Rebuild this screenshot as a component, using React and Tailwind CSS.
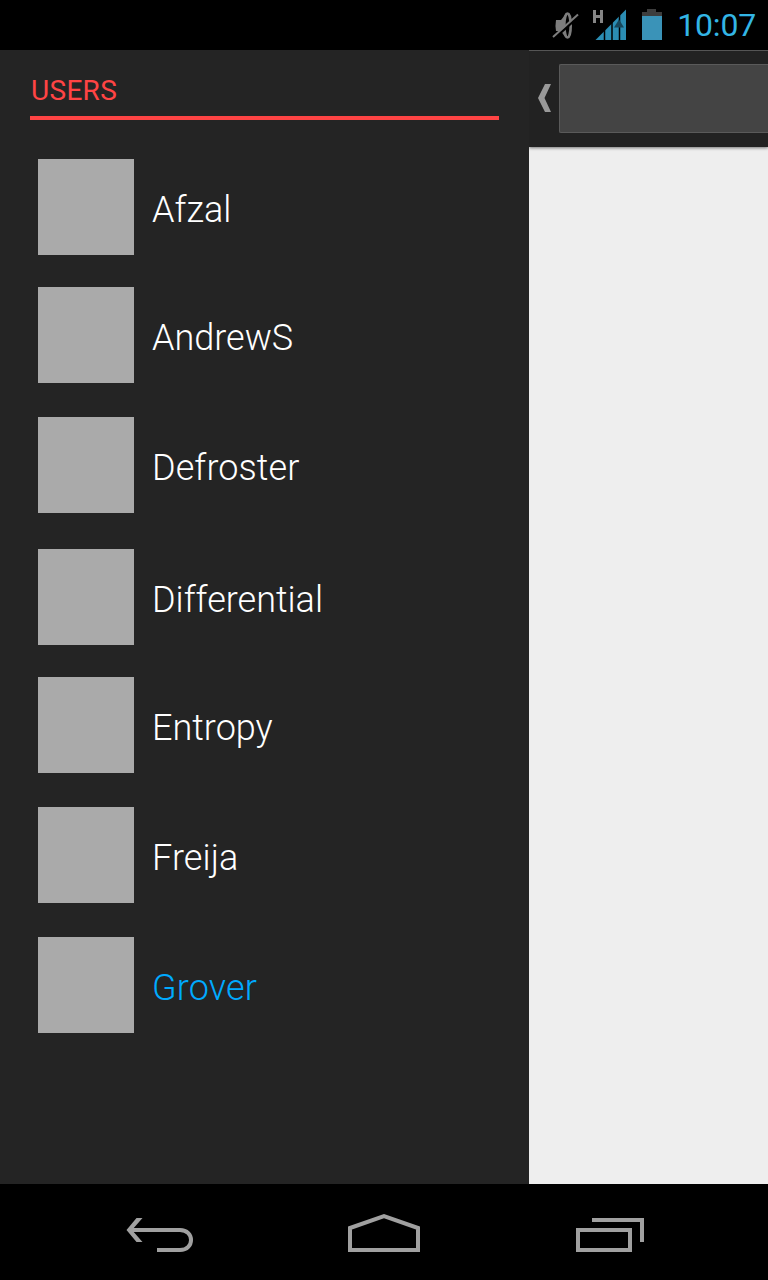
const users = [
  { name: "Afzal", row: "h-32", tracking: "tracking-normal" },
  { name: "AndrewS", row: "h-[130px]", tracking: "tracking-normal" },
  { name: "Defroster", row: "h-[132px]", tracking: "tracking-[0.08px]" },
  { name: "Differential", row: "h-32", tracking: "tracking-normal" },
  { name: "Entropy", row: "h-[130px]", tracking: "tracking-normal" },
  { name: "Freija", row: "h-[130px]", tracking: "tracking-[0.1px]" },
  { name: "Grover", row: "h-24", tracking: "tracking-[0.15px]", active: true },
];

function StatusBar() {
  return (
    <header className="flex h-[50px] shrink-0 items-center justify-end bg-black pr-3">
      <svg className="h-[50px] w-[126px]" viewBox="0 0 126 50">
        <path d="M14 20h5l4-5v22l-4-6h-5q-1-5.500 0-11z" fill="#7d7d7d" />
        <ellipse cx="25.500" cy="25.500" rx="3.200" ry="12" fill="#000" stroke="#7d7d7d" strokeWidth="2.600" />
        <path d="M12 38.500L36.500 16.500" stroke="#000" strokeWidth="2.500" />
        <path d="M11 37L36 14.500" stroke="#7d7d7d" strokeWidth="2" />
        <path d="M51 10h3v5h4v-5h3v13h-3v-5h-4v5h-3z" fill="#858585" />
        <path d="M53.500 40L84 9.500V40z" fill="#2b8db3" />
        <path d="M62.500 28v13M70 20v21M77.500 13v28" stroke="#000" strokeWidth="1.500" />
        <path d="M77 19.500l5 8H72z" fill="#17465a" />
        <path d="M105 9h9v3h6v4h-20v-4h5z" fill="#3d3d3d" />
        <path d="M100 16h20v24h-20z" fill="#3a93b8" />
      </svg>
      <time className="w-[88px] shrink-0 text-right text-[32px] leading-8 tracking-[-0.2px] whitespace-nowrap text-[#33b5e5]">10:07</time>
    </header>
  );
}

function UserDrawer() {
  return (
    <aside className="flex w-[529px] shrink-0 flex-col bg-[#242424] pr-[30px] pl-[30px]">
      <h1 className="h-[70px] border-b-4 border-[#ff4444] pt-[27px] pl-px text-[28px] leading-7 font-normal tracking-[0.3px] text-[#ff4444]">USERS</h1>
      <ul className="flex flex-col pt-[39px] pl-2">
        {users.map((user) => (
          <li key={user.name} className={`flex items-start ${user.row}`}>
            <div className="size-24 shrink-0 bg-[#aaaaaa]" />
            <span className={`pt-[30px] pl-[18px] text-[36px] leading-[42px] font-light ${user.tracking} ${user.active ? "text-[#00aaff]" : "text-white"}`}>
              {user.name}
            </span>
          </li>
        ))}
      </ul>
    </aside>
  );
}

function ContentPeek() {
  return (
    <main className="flex grow flex-col overflow-hidden bg-[#eeeeee]">
      <div className="flex h-[97px] items-start border-t border-[#555555] bg-[#222222] shadow-[0_1px_3px_rgba(0,0,0,0.5)]">
        <svg className="mt-[33px] ml-[9px] h-7 w-[13px] shrink-0" viewBox="0 0 13 28">
          <path d="M7 0h6L6.500 14 13 28H7L0 14z" fill="#999999" />
        </svg>
        <div className="mt-[13px] ml-2 h-[69px] grow rounded-l-xs border border-r-0 border-[#5a5a5a] bg-[#444444]" />
      </div>
    </main>
  );
}

function NavigationBar() {
  return (
    <nav className="flex h-24 shrink-0 items-center bg-black">
      <svg className="h-24 w-full" viewBox="0 0 768 96" fill="none" stroke="#a0a0a0" strokeWidth="4">
        <path d="M130 46h50c14.700 0 14.700 20 0 20h-23" />
        <path d="M136.500 34h6L132 46l10.500 12h-6L126.500 46z" fill="#a0a0a0" stroke="none" />
        <path d="M350 44v22h68V44l-34-12z" />
        <path d="M578 46h52v20h-52zM592 36h50v22" />
      </svg>
    </nav>
  );
}

export default function App() {
  return (
    <div className="flex h-[1280px] w-[768px] flex-col overflow-hidden font-['Roboto',sans-serif]">
      <StatusBar />
      <div className="flex grow">
        <UserDrawer />
        <ContentPeek />
      </div>
      <NavigationBar />
    </div>
  );
}
